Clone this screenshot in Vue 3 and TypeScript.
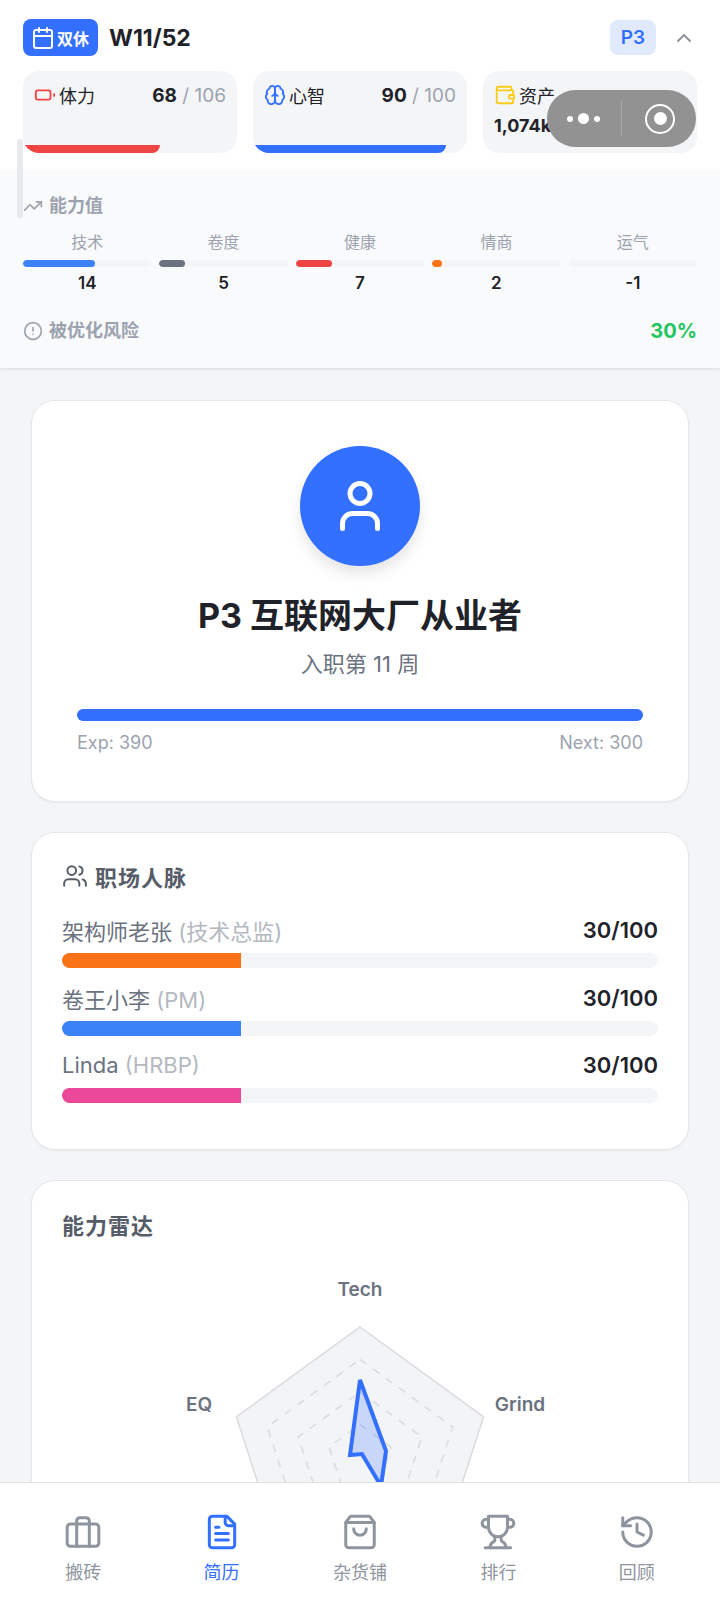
<template>
  <div class="app">
    <header class="top">
      <div class="top-row">
        <div class="week-badge">
          <svg class="ico" width="24" height="24" viewBox="0 0 24 24" fill="none" stroke="currentColor" stroke-width="2" stroke-linecap="round" stroke-linejoin="round">
            <path d="M8 2v4" /><path d="M16 2v4" /><rect x="3" y="4" width="18" height="18" rx="2" /><path d="M3 10h18" />
          </svg>
          <span>双休</span>
        </div>
        <div class="week">W11/52</div>
        <div class="level-chip">P3</div>
        <svg class="chevron" width="24" height="24" viewBox="0 0 24 24" fill="none" stroke="currentColor" stroke-width="2" stroke-linecap="round" stroke-linejoin="round">
          <path d="m18 15-6-6-6 6" />
        </svg>
      </div>

      <div class="stat-row">
        <div class="stat-card">
          <div class="stat-line">
            <svg class="ico red" width="22" height="22" viewBox="0 0 24 24" fill="none" stroke="currentColor" stroke-width="2" stroke-linecap="round" stroke-linejoin="round">
              <rect x="2" y="7" width="16" height="10" rx="2" /><path d="M22 11v2" />
            </svg>
            <span class="stat-name">体力</span>
            <span class="stat-num"><b>68</b><i> / 106</i></span>
          </div>
          <div class="stat-fill red-bg" style="width: 64%"></div>
        </div>
        <div class="stat-card">
          <div class="stat-line">
            <svg class="ico blue" width="22" height="22" viewBox="0 0 24 24" fill="none" stroke="currentColor" stroke-width="2" stroke-linecap="round" stroke-linejoin="round">
              <path d="M12 5a3 3 0 1 0-5.997.125 4 4 0 0 0-2.526 5.77 4 4 0 0 0 .556 6.588A4 4 0 1 0 12 18Z" />
              <path d="M12 5a3 3 0 1 1 5.997.125 4 4 0 0 1 2.526 5.77 4 4 0 0 1-.556 6.588A4 4 0 1 1 12 18Z" />
              <path d="M15 13a4.5 4.5 0 0 1-3-4 4.5 4.5 0 0 1-3 4" />
              <path d="M12 9v9" />
            </svg>
            <span class="stat-name">心智</span>
            <span class="stat-num"><b>90</b><i> / 100</i></span>
          </div>
          <div class="stat-fill blue-bg" style="width: 90%"></div>
        </div>
        <div class="stat-card">
          <div class="stat-line">
            <svg class="ico yellow" width="22" height="22" viewBox="0 0 24 24" fill="none" stroke="currentColor" stroke-width="2" stroke-linecap="round" stroke-linejoin="round">
              <path d="M19 7V4a1 1 0 0 0-1-1H5a2 2 0 0 0 0 4h15a1 1 0 0 1 1 1v4h-3a2 2 0 0 0 0 4h3a1 1 0 0 0 1-1v-2a1 1 0 0 0-1-1" />
              <path d="M3 5v14a2 2 0 0 0 2 2h15a1 1 0 0 0 1-1v-4" />
            </svg>
            <span class="stat-name">资产</span>
          </div>
          <div class="stat-money">1,074k</div>
        </div>
      </div>
    </header>

    <section class="abilities">
      <div class="sec-label">
        <svg width="20" height="20" viewBox="0 0 24 24" fill="none" stroke="currentColor" stroke-width="2" stroke-linecap="round" stroke-linejoin="round">
          <path d="m22 7-8.5 8.5-5-5L2 17" /><path d="M16 7h6v6" />
        </svg>
        <span>能力值</span>
      </div>
      <div class="ability-grid">
        <div v-for="a in abilities" :key="a.name" class="ability">
          <div class="ability-name">{{ a.name }}</div>
          <div class="ability-track">
            <div class="ability-fill" :style="{ width: `${Math.max(a.value, 0) * 4}%`, background: a.color }"></div>
          </div>
          <div class="ability-value">{{ a.value }}</div>
        </div>
      </div>
      <div class="risk-row">
        <div class="sec-label">
          <svg width="20" height="20" viewBox="0 0 24 24" fill="none" stroke="currentColor" stroke-width="2" stroke-linecap="round" stroke-linejoin="round">
            <circle cx="12" cy="12" r="10" /><path d="M12 8v4" /><path d="M12 16h.01" />
          </svg>
          <span>被优化风险</span>
        </div>
        <div class="risk-value">30%</div>
      </div>
    </section>

    <main class="content">
      <div class="card profile">
        <div class="avatar">
          <svg width="60" height="60" viewBox="0 0 24 24" fill="none" stroke="currentColor" stroke-width="2" stroke-linecap="round" stroke-linejoin="round">
            <path d="M19 21v-2a4 4 0 0 0-4-4H9a4 4 0 0 0-4 4v2" /><circle cx="12" cy="7" r="4" />
          </svg>
        </div>
        <h1 class="profile-title">P3 互联网大厂从业者</h1>
        <div class="profile-sub">入职第 11 周</div>
        <div class="exp-bar"></div>
        <div class="exp-row"><span>Exp: 390</span><span>Next: 300</span></div>
      </div>

      <div class="card people">
        <div class="card-title">
          <svg width="26" height="26" viewBox="0 0 24 24" fill="none" stroke="currentColor" stroke-width="1.8" stroke-linecap="round" stroke-linejoin="round">
            <path d="M16 21v-2a4 4 0 0 0-4-4H6a4 4 0 0 0-4 4v2" /><circle cx="9" cy="7" r="4" />
            <path d="M22 21v-2a4 4 0 0 0-3-3.87" /><path d="M16 3.13a4 4 0 0 1 0 7.75" />
          </svg>
          <span>职场人脉</span>
        </div>
        <div class="person-list">
          <div v-for="p in people" :key="p.name" class="person">
            <div class="person-line">
              <span>{{ p.name }} <em>({{ p.role }})</em></span>
              <b>{{ p.score }}/100</b>
            </div>
            <div class="person-track">
              <div class="person-fill" :style="{ width: `${p.score}%`, background: p.color }"></div>
            </div>
          </div>
        </div>
      </div>

      <div class="card radar">
        <div class="card-title"><span>能力雷达</span></div>
        <svg class="radar-chart" width="596" height="240" viewBox="0 0 596 240">
          <polygon :points="ring(1)" fill="#f3f4f6" stroke="#d9dbdf" stroke-width="1.5" />
          <polygon v-for="s in [0.75, 0.5, 0.25]" :key="s" :points="ring(s)" fill="none" stroke="#d9dbdf" stroke-width="1.5" stroke-dasharray="8 8" />
          <polygon points="298,119 324,190 319,225 300,193 288,194" fill="rgba(51,112,255,0.22)" stroke="#3370ff" stroke-width="4" />
          <text x="298" y="35" class="axis">Tech</text>
          <text x="458" y="150" class="axis">Grind</text>
          <text x="137" y="150" class="axis">EQ</text>
        </svg>
      </div>
    </main>

    <nav class="tabbar">
      <div v-for="t in tabs" :key="t.label" class="tab" :class="{ active: t.active }">
        <svg width="38" height="38" viewBox="0 0 24 24" fill="none" stroke="currentColor" stroke-width="1.9" stroke-linecap="round" stroke-linejoin="round">
          <rect v-if="t.rect" x="2" y="7" width="20" height="14" rx="2" />
          <path v-for="d in t.paths" :key="d" :d="d" />
        </svg>
        <span>{{ t.label }}</span>
      </div>
    </nav>

    <!-- 小程序胶囊 + 滚动条，都浮在内容上面 -->
    <div class="scroll-thumb"></div>
    <div class="capsule">
      <div class="capsule-dots"><i></i><i class="big"></i><i></i></div>
      <div class="capsule-line"></div>
      <div class="capsule-target"><i></i></div>
    </div>
  </div>
</template>

<script setup lang="ts">
type Ability = { name: string; value: number; color: string }
type Person = { name: string; role: string; score: number; color: string }
type Tab = { label: string; paths: string[]; rect?: boolean; active?: boolean }

const abilities: Ability[] = [
  { name: '技术', value: 14, color: '#3b82f6' },
  { name: '卷度', value: 5, color: '#6b7280' },
  { name: '健康', value: 7, color: '#ef4444' },
  { name: '情商', value: 2, color: '#f97316' },
  { name: '运气', value: -1, color: '#a855f7' },
]

const people: Person[] = [
  { name: '架构师老张', role: '技术总监', score: 30, color: '#f97316' },
  { name: '卷王小李', role: 'PM', score: 30, color: '#3b82f6' },
  { name: 'Linda', role: 'HRBP', score: 30, color: '#ec4899' },
]

const tabs: Tab[] = [
  { label: '搬砖', rect: true, paths: ['M16 21V5a2 2 0 0 0-2-2h-4a2 2 0 0 0-2 2v16'] },
  {
    label: '简历',
    active: true,
    paths: [
      'M15 2H6a2 2 0 0 0-2 2v16a2 2 0 0 0 2 2h12a2 2 0 0 0 2-2V7Z',
      'M14 2v4a2 2 0 0 0 2 2h4',
      'M10 9H8',
      'M16 13H8',
      'M16 17H8',
    ],
  },
  {
    label: '杂货铺',
    paths: ['M6 2 3 6v14a2 2 0 0 0 2 2h14a2 2 0 0 0 2-2V6l-3-4Z', 'M3 6h18', 'M16 10a4 4 0 0 1-8 0'],
  },
  {
    label: '排行',
    paths: [
      'M6 9H4.5a2.5 2.5 0 0 1 0-5H6',
      'M18 9h1.5a2.5 2.5 0 0 0 0-5H18',
      'M4 22h16',
      'M10 14.66V17c0 .55-.47.98-.97 1.21C7.85 18.75 7 20.24 7 22',
      'M14 14.66V17c0 .55.47.98.97 1.21C16.15 18.75 17 20.24 17 22',
      'M18 2H6v7a6 6 0 0 0 12 0V2Z',
    ],
  },
  {
    label: '回顾',
    paths: ['M3 12a9 9 0 1 0 9-9 9.75 9.75 0 0 0-6.74 2.74L3 8', 'M3 3v5h5', 'M12 7v5l4 2'],
  },
]

// 雷达图五边形，s 是相对半径
function ring(s: number) {
  const cx = 298
  const cy = 196
  const r = 130
  return [0, 1, 2, 3, 4]
    .map((i) => {
      const a = (i * 72 * Math.PI) / 180
      return `${(cx + Math.sin(a) * r * s).toFixed(1)},${(cy - Math.cos(a) * r * s).toFixed(1)}`
    })
    .join(' ')
}
</script>

<style>
body {
  margin: 0;
  background: #f4f5f7;
}
</style>

<style scoped>
.app {
  position: relative;
  width: 720px;
  height: 1600px;
  display: flex;
  flex-direction: column;
  overflow: hidden;
  background: #f4f5f7;
  color: #1f2329;
  font-family: Inter, 'Noto Sans CJK SC', sans-serif;
}

.top {
  background: #fff;
  padding: 19px 23px 18px;
}
.top-row {
  display: flex;
  align-items: center;
  height: 37px;
}
.week-badge {
  display: flex;
  align-items: center;
  gap: 2px;
  height: 37px;
  padding: 0 9px 0 8px;
  border-radius: 8px;
  background: #3370ff;
  color: #fff;
  font-size: 16px;
  font-weight: 700;
}
.week {
  margin-left: 11px;
  font-size: 23px;
  font-weight: 700;
}
.level-chip {
  margin-left: auto;
  width: 46px;
  height: 35px;
  line-height: 35px;
  text-align: center;
  border-radius: 8px;
  background: #e1eafd;
  color: #3370ff;
  font-size: 19px;
  font-weight: 600;
}
.chevron {
  margin: 0 1px 0 16px;
  color: #8f959e;
}
.ico {
  flex: none;
}
.red {
  color: #ef4444;
}
.blue {
  color: #3370ff;
}
.yellow {
  color: #facc15;
}
.red-bg {
  background: #ef4444;
}
.blue-bg {
  background: #3370ff;
}

.stat-row {
  display: grid;
  grid-template-columns: repeat(3, 1fr);
  gap: 16px;
  margin-top: 15px;
}
.stat-card {
  position: relative;
  height: 82px;
  padding: 12px 11px 0 11px;
  box-sizing: border-box;
  border-radius: 16px;
  background: #f4f5f7;
  overflow: hidden;
}
.stat-line {
  display: flex;
  align-items: center;
  gap: 3px;
  height: 24px;
}
.stat-name {
  font-size: 18px;
}
.stat-num {
  margin-left: auto;
  font-size: 19px;
  white-space: pre;
}
.stat-num b {
  font-weight: 700;
}
.stat-num i {
  font-style: normal;
  color: #9ca3af;
}
.stat-money {
  margin-top: 8px;
  font-size: 18px;
  font-weight: 700;
  line-height: 22px;
}
.stat-fill {
  position: absolute;
  left: 0;
  bottom: 0;
  height: 8px;
  border-radius: 0 0 8px 8px;
}

.abilities {
  position: relative;
  padding: 23px 23px 23px;
  background: #f9fafb;
  box-shadow: 0 1px 3px rgba(0, 0, 0, 0.12);
}
.sec-label {
  display: flex;
  align-items: center;
  gap: 6px;
  color: #9ca3af;
  font-size: 18px;
  font-weight: 600;
  line-height: 24px;
}
.ability-grid {
  display: grid;
  grid-template-columns: repeat(5, 1fr);
  gap: 8px;
  margin-top: 12px;
}
.ability {
  text-align: center;
}
.ability-name {
  color: #9ca3af;
  font-size: 16px;
  line-height: 24px;
}
.ability-track {
  height: 7px;
  margin-top: 6px;
  border-radius: 4px;
  background: #f4f5f7;
  overflow: hidden;
}
.ability-fill {
  height: 100%;
  border-radius: 4px;
}
.ability-value {
  margin-top: 3px;
  font-size: 17px;
  font-weight: 600;
  line-height: 26px;
}
.risk-row {
  display: flex;
  align-items: center;
  justify-content: space-between;
  margin-top: 21px;
}
.risk-value {
  color: #22c55e;
  font-size: 20px;
  font-weight: 700;
  line-height: 28px;
}

.content {
  flex: 1;
  min-height: 0;
  padding: 32px 31px 0;
  overflow: hidden;
}
.card {
  box-sizing: border-box;
  margin-bottom: 30px;
  border: 1px solid #e5e7eb;
  border-radius: 24px;
  background: #fff;
  box-shadow: 0 1px 2px rgba(0, 0, 0, 0.05);
}
.profile {
  height: 402px;
  padding: 45px 45px 0;
  text-align: center;
}
.avatar {
  display: flex;
  align-items: center;
  justify-content: center;
  width: 120px;
  height: 120px;
  margin: 0 auto;
  border-radius: 50%;
  background: #3370ff;
  color: #fff;
  box-shadow: 0 8px 14px rgba(0, 0, 0, 0.1);
}
.profile-title {
  margin: 29px 0 0;
  font-size: 34px;
  font-weight: 700;
  line-height: 42px;
}
.profile-sub {
  margin-top: 13px;
  color: #6b7280;
  font-size: 22px;
  line-height: 28px;
}
.exp-bar {
  height: 12px;
  margin-top: 31px;
  border-radius: 6px;
  background: #3370ff;
}
.exp-row {
  display: flex;
  justify-content: space-between;
  margin-top: 10px;
  color: #9ca3af;
  font-size: 18px;
  line-height: 24px;
}

.people {
  height: 318px;
  padding: 28px 30px 0;
}
.card-title {
  display: flex;
  align-items: center;
  gap: 7px;
  height: 30px;
  color: #565d68;
  font-size: 22px;
  font-weight: 600;
  letter-spacing: 1px;
}
.person-list {
  display: flex;
  flex-direction: column;
  gap: 13.5px;
  margin-top: 23px;
}
.person-line {
  display: flex;
  justify-content: space-between;
  align-items: center;
  height: 32px;
  color: #6b7280;
  font-size: 22px;
}
.person-line em {
  font-style: normal;
  color: #b4b8bf;
}
.person-line b {
  color: #1f2329;
  font-size: 22px;
  font-weight: 600;
}
.person-track {
  height: 15px;
  margin-top: 7px;
  border-radius: 8px;
  background: #f4f5f7;
  overflow: hidden;
}
.person-fill {
  height: 100%;
}

.radar {
  height: 340px;
  padding: 28px 30px 0;
}
.radar-chart {
  display: block;
  margin-top: 22px;
}
.axis {
  fill: #6b7280;
  font-size: 19px;
  font-weight: 600;
  text-anchor: middle;
}

.tabbar {
  display: grid;
  grid-template-columns: repeat(5, 1fr);
  flex: none;
  height: 118px;
  box-sizing: border-box;
  padding: 30px 14px 0;
  border-top: 1px solid #dfe1e5;
  background: #fff;
}
.tab {
  display: flex;
  flex-direction: column;
  align-items: center;
  color: #8f959e;
  font-size: 18px;
  line-height: 24px;
}
.tab span {
  margin-top: 10px;
}
.tab.active {
  color: #3370ff;
}

.scroll-thumb {
  position: absolute;
  left: 17px;
  top: 139px;
  width: 6px;
  height: 79px;
  border-radius: 3px;
  background: #e9eaec;
}
.capsule {
  position: absolute;
  left: 547px;
  top: 90px;
  display: flex;
  align-items: center;
  width: 149px;
  height: 57px;
  border-radius: 29px;
  background: #929292;
}
.capsule-dots {
  display: flex;
  align-items: center;
  justify-content: center;
  gap: 5px;
  width: 72px;
  margin-right: 2px;
}
.capsule-dots i {
  width: 6px;
  height: 6px;
  border-radius: 50%;
  background: #fff;
}
.capsule-dots i.big {
  width: 11px;
  height: 11px;
}
.capsule-line {
  width: 1px;
  height: 37px;
  background: #aaa;
}
.capsule-target {
  display: flex;
  align-items: center;
  justify-content: center;
  width: 30px;
  height: 30px;
  margin-left: 23px;
  border: 2px solid #fff;
  border-radius: 50%;
  box-sizing: border-box;
}
.capsule-target i {
  width: 13px;
  height: 13px;
  border-radius: 50%;
  background: #fff;
}
</style>
